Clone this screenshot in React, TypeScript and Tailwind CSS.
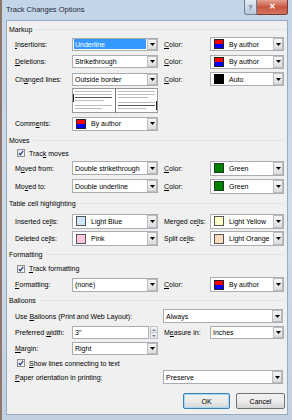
import React from "react";

type Sw = "author" | "auto" | "green" | "blue" | "pink" | "yellow" | "orange";

const Swatch = ({ kind }: { kind: Sw }) => {
  if (kind === "author")
    return (
      <div className="flex h-[10px] w-[10px] flex-col border border-[#222]">
        <div className="flex-1 bg-[#ff0000]" />
        <div className="flex-1 bg-[#0000ff]" />
      </div>
    );
  const bg = {
    auto: "bg-[#000000] border-[#000]",
    green: "bg-[#008000] border-[#1d3b1d]",
    blue: "bg-[#cde6fb] border-[#555]",
    pink: "bg-[#fcc8e2] border-[#555]",
    yellow: "bg-[#fffcc8] border-[#555]",
    orange: "bg-[#fbdcbc] border-[#555]",
  }[kind];
  return <div className={`h-[10px] w-[10px] border ${bg}`} />;
};

const Arrow = () => (
  <div className="flex h-full w-[10px] shrink-0 items-center justify-center border border-[#b9bcc0] bg-gradient-to-b from-[#f6f6f6] to-[#dcdcdc]">
    <svg width="5" height="3" viewBox="0 0 5 3">
      <path d="M0 0h5L2.5 3z" fill="#000" />
    </svg>
  </div>
);

const Drop = ({
  text,
  w,
  h = "h-[14px]",
  sw,
  selected,
}: {
  text: string;
  w: string;
  h?: string;
  sw?: Sw;
  selected?: boolean;
}) => (
  <div className={`flex shrink-0 items-center border border-[#abadb3] bg-white ${w} ${h}`}>
    <div className="flex h-full min-w-0 flex-1 items-center gap-[4px] px-[1px]">
      {sw && (
        <div className="pl-[2px]">
          <Swatch kind={sw} />
        </div>
      )}
      <span
        className={`flex h-[10px] flex-1 items-center whitespace-nowrap pl-[1px] ${
          selected ? "bg-[#3399ff] text-white" : ""
        }`}
      >
        {text}
      </span>
    </div>
    <Arrow />
  </div>
);

const Header = ({ text, h }: { text: string; h: string }) => (
  <div className={`flex items-center gap-[4px] pl-[2px] ${h}`}>
    <span>{text}</span>
    <div className="h-px flex-1 bg-[#dde5ec]" />
  </div>
);

const Check = ({ children, h }: { children: React.ReactNode; h: string }) => (
  <div className={`flex items-center gap-[4px] pl-[10px] ${h}`}>
    <div className="flex h-[8px] w-[8px] items-center justify-center border border-[#8f8f8f] bg-gradient-to-br from-[#e6e6e6] to-white">
      <svg width="6" height="6" viewBox="0 0 6 6">
        <path d="M0.8 3.2 L2.3 4.8 L5.2 0.8" stroke="#25408f" strokeWidth="1.3" fill="none" />
      </svg>
    </div>
    <span>{children}</span>
  </div>
);

const Row = ({
  h,
  label,
  left,
  label2,
  right,
}: {
  h: string;
  label: React.ReactNode;
  left: React.ReactNode;
  label2?: React.ReactNode;
  right?: React.ReactNode;
}) => (
  <div className={`flex items-center pl-[8px] ${h}`}>
    <div className="w-[57px] shrink-0 whitespace-nowrap">{label}</div>
    {left}
    {label2 && <div className="ml-[6px] w-[46px] shrink-0 whitespace-nowrap">{label2}</div>}
    {right}
  </div>
);

const Preview = () => (
  <svg width="86" height="25" viewBox="0 0 86 25" className="block">
    <rect x="0.5" y="0.5" width="85" height="24" fill="#fff" stroke="#9a9a9a" />
    <line x1="43.5" y1="0" x2="43.5" y2="25" stroke="#777" />
    {/* left pane */}
    <line x1="3" y1="3.5" x2="40" y2="3.5" stroke="#bbb" />
    <line x1="3" y1="6.5" x2="40" y2="6.5" stroke="#bbb" />
    <line x1="3" y1="9.5" x2="40" y2="9.5" stroke="#555" />
    <line x1="3" y1="12.5" x2="32" y2="12.5" stroke="#bbb" />
    <line x1="3" y1="17.5" x2="40" y2="17.5" stroke="#bbb" />
    <line x1="3" y1="20.5" x2="30" y2="20.5" stroke="#bbb" />
    <line x1="1.5" y1="6" x2="1.5" y2="14" stroke="#222" />
    {/* right pane */}
    <line x1="46" y1="3.5" x2="83" y2="3.5" stroke="#bbb" />
    <line x1="46" y1="6.5" x2="83" y2="6.5" stroke="#bbb" />
    <line x1="46" y1="9.5" x2="76" y2="9.5" stroke="#bbb" />
    <line x1="46" y1="14.5" x2="83" y2="14.5" stroke="#bbb" />
    <line x1="46" y1="17.5" x2="83" y2="17.5" stroke="#555" />
    <line x1="46" y1="20.5" x2="74" y2="20.5" stroke="#bbb" />
    <line x1="84.5" y1="13" x2="84.5" y2="22" stroke="#222" />
  </svg>
);

export default function App() {
  return (
    <div className="flex h-[420px] w-[292px] flex-col border-l-2 border-l-[#8f7767] bg-gradient-to-b from-[#c4d5e8] via-[#cfdcea] to-[#c2d1e1] font-['Liberation_Sans',Arial,sans-serif] text-[7px] leading-none text-black">
      {/* title bar */}
      <div className="flex h-[20px] shrink-0 items-start justify-between">
        <span className="pl-[4px] pt-[6px] text-[7.5px] text-[#1e2b3a]">Track Changes Options</span>
        <div className="mr-[4px] flex">
          <div className="flex h-[15px] w-[13px] items-center justify-center rounded-bl-[3px] border border-t-0 border-[#6f7f92] bg-gradient-to-b from-[#e3ebf4] to-[#b9c9dc] text-[7px] font-bold text-[#5b6b7d]">
            ?
          </div>
          <div className="flex h-[15px] w-[31px] items-center justify-center rounded-br-[3px] border border-l-0 border-t-0 border-[#7a3a33] bg-gradient-to-b from-[#e3a293] via-[#c9553f] to-[#d0735e] text-[8px] font-bold text-white">
            ✕
          </div>
        </div>
      </div>

      {/* client area */}
      <div className="mx-[4px] flex h-[395px] flex-col border border-[#9aabbd] bg-[#f0f0f0] pr-[2px] pt-[2px]">
        <Header text="Markup" h="h-[12px]" />
        <Row
          h="h-[18px]"
          label={<><u>I</u>nsertions:</>}
          left={<Drop text="Underline" w="w-[86px]" h="h-[13px]" selected />}
          label2={<><u>C</u>olor:</>}
          right={<Drop text="By author" w="w-[74px]" sw="author" />}
        />
        <Row
          h="h-[17px]"
          label={<><u>D</u>eletions:</>}
          left={<Drop text="Strikethrough" w="w-[86px]" h="h-[13px]" />}
          label2={<><u>C</u>olor:</>}
          right={<Drop text="By author" w="w-[74px]" sw="author" />}
        />
        <Row
          h="h-[18px]"
          label={<>Ch<u>a</u>nged lines:</>}
          left={<Drop text="Outside border" w="w-[86px]" h="h-[13px]" />}
          label2={<><u>C</u>olor:</>}
          right={<Drop text="Auto" w="w-[74px]" sw="auto" />}
        />
        <div className="flex h-[26px] items-start pl-[65px]">
          <Preview />
        </div>
        <Row
          h="h-[19px]"
          label={<>Comm<u>e</u>nts:</>}
          left={<Drop text="By author" w="w-[86px]" sw="author" />}
        />

        <Header text="Moves" h="h-[14px]" />
        <Check h="h-[12px]">
          Trac<u>k</u> moves
        </Check>
        <Row
          h="h-[18px]"
          label={<>M<u>o</u>ved from:</>}
          left={<Drop text="Double strikethrough" w="w-[86px]" />}
          label2={<><u>C</u>olor:</>}
          right={<Drop text="Green" w="w-[74px]" h="h-[15px]" sw="green" />}
        />
        <Row
          h="h-[18px]"
          label={<>Mo<u>v</u>ed to:</>}
          left={<Drop text="Double underline" w="w-[86px]" />}
          label2={<><u>C</u>olor:</>}
          right={<Drop text="Green" w="w-[74px]" h="h-[15px]" sw="green" />}
        />

        <Header text="Table cell highlighting" h="h-[16px]" />
        <Row
          h="h-[20px]"
          label={<>Inserted ce<u>l</u>ls:</>}
          left={<Drop text="Light Blue" w="w-[86px]" h="h-[15px]" sw="blue" />}
          label2={<>Merged ce<u>l</u>ls:</>}
          right={<Drop text="Light Yellow" w="w-[74px]" h="h-[15px]" sw="yellow" />}
        />
        <Row
          h="h-[15px]"
          label={<>Deleted ce<u>l</u>ls:</>}
          left={<Drop text="Pink" w="w-[86px]" h="h-[15px]" sw="pink" />}
          label2={<>Split ce<u>l</u>ls:</>}
          right={<Drop text="Light Orange" w="w-[74px]" h="h-[15px]" sw="orange" />}
        />

        <Header text="Formatting" h="h-[16px]" />
        <Check h="h-[13px]">
          <u>T</u>rack formatting
        </Check>
        <Row
          h="h-[19px]"
          label={<><u>F</u>ormatting:</>}
          left={<Drop text="(none)" w="w-[86px]" />}
          label2={<><u>C</u>olor:</>}
          right={<Drop text="By author" w="w-[74px]" h="h-[15px]" sw="author" />}
        />

        <Header text="Balloons" h="h-[12px]" />
        <div className="flex h-[20px] items-center pl-[8px]">
          <div className="w-[148px] shrink-0 whitespace-nowrap">
            Use <u>B</u>alloons (Print and Web Layout):
          </div>
          <Drop text="Always" w="w-[120px]" />
        </div>
        <div className="flex h-[13px] items-center pl-[8px]">
          <div className="w-[57px] shrink-0 whitespace-nowrap">
            Preferred <u>w</u>idth:
          </div>
          <div className="flex h-[13px] w-[77px] items-center border border-[#abadb3] bg-white pl-[2px]">3"</div>
          <div className="ml-[1px] flex h-[13px] w-[8px] flex-col">
            <div className="flex flex-1 items-center justify-center border border-[#c2c5c9] bg-gradient-to-b from-[#f6f6f6] to-[#e2e2e2]">
              <svg width="4" height="2" viewBox="0 0 4 2">
                <path d="M0 2h4L2 0z" fill="#7a8a9e" />
              </svg>
            </div>
            <div className="flex flex-1 items-center justify-center border border-t-0 border-[#c2c5c9] bg-gradient-to-b from-[#f6f6f6] to-[#e2e2e2]">
              <svg width="4" height="2" viewBox="0 0 4 2">
                <path d="M0 0h4L2 2z" fill="#7a8a9e" />
              </svg>
            </div>
          </div>
          <div className="ml-[6px] w-[46px] shrink-0 whitespace-nowrap">
            M<u>e</u>asure in:
          </div>
          <Drop text="Inches" w="w-[74px]" h="h-[13px]" />
        </div>
        <Row
          h="h-[18px]"
          label={<><u>M</u>argin:</>}
          left={<Drop text="Right" w="w-[86px]" h="h-[13px]" />}
        />
        <Check h="h-[12px]">
          <u>S</u>how lines connecting to text
        </Check>
        <div className="flex h-[16px] items-center pl-[8px]">
          <div className="w-[148px] shrink-0 whitespace-nowrap">
            <u>P</u>aper orientation in printing:
          </div>
          <Drop text="Preserve" w="w-[120px]" />
        </div>

        <div className="mt-[8px] flex justify-end gap-[6px]">
          <button className="flex h-[16px] w-[47px] items-center justify-center rounded-[2px] border border-[#3c7fb1] bg-gradient-to-b from-[#f2f2f2] via-[#ebebeb] to-[#d5d5d5] text-[7px] leading-none shadow-[inset_0_0_0_1px_#a7d8f5]">
            OK
          </button>
          <button className="flex h-[16px] w-[49px] items-center justify-center rounded-[2px] border border-[#707070] bg-gradient-to-b from-[#f2f2f2] via-[#ebebeb] to-[#d5d5d5] text-[7px] leading-none">
            Cancel
          </button>
        </div>
      </div>
    </div>
  );
}
